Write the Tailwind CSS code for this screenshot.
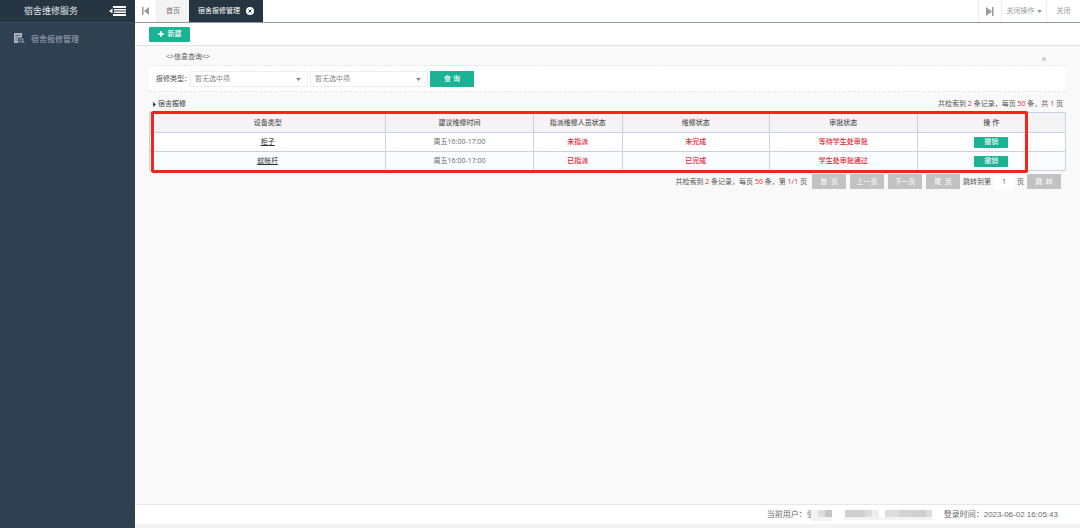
<!DOCTYPE html>
<html lang="zh-CN">
<head>
<meta charset="utf-8">
<title>宿舍维修服务</title>
<script src="https://cdn.jsdelivr.net/npm/@tailwindcss/browser@4"></script>
</head>
<body class="flex h-screen overflow-hidden bg-[#f9f9f9] font-['Open_Sans','Noto_Sans_CJK_SC',sans-serif] text-[7px] leading-[10px] text-[#555]">
<aside class="flex w-[135px] shrink-0 flex-col bg-[#2f4050]">
  <div class="flex h-[23px] items-center justify-between border-b border-[#3c4c5b] bg-[#263542] pr-2 pl-6 text-[9px] text-[#e4e7ea]">
    <h1>宿舍维修服务</h1>
    <button aria-label="收起菜单"><svg class="h-[10px] w-[18px]" viewBox="0 0 18 10" fill="#fff"><path d="M0 5l3.500-2.500v5zM4 0h13v2H4zM5 3h12v1.500H5zM5 5.500h12V7H5zM4 8h13v2H4z"/></svg></button>
  </div>
  <nav>
    <a href="#" class="flex h-[31px] items-center gap-1.5 pl-3.5 text-[8px] text-[#a1abbb]">
      <svg class="h-[11px] w-[11px]" viewBox="0 0 11 11" fill="none" stroke="#a7b1c2"><path d="M0 0h8v4.500A3.200 3.200 0 0 0 5 10H0z" fill="#a7b1c2" stroke="none"/><path d="M1.500 2.500h4.500M1.500 4.700h3M1.500 7h2" stroke="#2f4050" stroke-width=".6"/><circle cx="7.500" cy="7.300" r="1.700"/><path d="M8.700 8.500l2 2"/></svg>
      宿舍报修管理
    </a>
  </nav>
</aside>
<div class="flex min-w-0 flex-1 flex-col">
  <header class="flex h-[23px] shrink-0 border-b border-[#8d98a1] bg-white text-[#999]">
    <button class="flex w-[22px] items-center justify-center border-r border-[#eee]" aria-label="向左"><svg class="h-[8px] w-[8px]" viewBox="0 0 8 8" fill="#999"><path d="M0 0h1.500v8H0zM2 4l5-4v8z"/></svg></button>
    <a href="#" class="flex w-[32px] items-center justify-center bg-[#f3f3f3] text-[#777]">首页</a>
    <a href="#" class="flex w-[74px] items-center justify-center gap-1.5 bg-[#263542] text-white">宿舍报修管理
      <svg class="h-[8px] w-[8px]" viewBox="0 0 8 8"><circle cx="4" cy="4" r="4" fill="#fff"/><path d="M2.500 2.500l3 3M5.500 2.500l-3 3" stroke="#263542"/></svg>
    </a>
    <button class="ml-auto flex w-[24px] items-center justify-center border-x border-[#eee]" aria-label="向右"><svg class="h-[9px] w-[8px]" viewBox="0 0 8 9" fill="#999"><path d="M6 0h1.500v9H6zM0 0l6 4.500L0 9z"/></svg></button>
    <button class="flex w-[45px] items-center justify-center gap-0.5 border-r border-[#eee]">关闭操作<svg class="h-[3px] w-[5px]" viewBox="0 0 5 3" fill="#999"><path d="M0 0h5L2.500 3z"/></svg></button>
    <button class="w-[33px]">关闭</button>
  </header>
  <div class="flex h-[23px] shrink-0 items-center border-b border-[#e3e3e3] bg-white pl-3.5">
    <button class="flex h-[15px] w-[41px] items-center justify-center gap-1 rounded-[1px] bg-[#1ab394] font-medium text-white"><svg class="h-[6px] w-[6px]" viewBox="0 0 6 6" stroke="#fff" stroke-width="1.500"><path d="M3 0v6M0 3h6"/></svg>新建</button>
  </div>
  <main class="flex-1 px-3.5">
    <section>
      <div class="flex h-[20px] items-center justify-between border-b border-dashed border-[#e7e7e7] pt-0.5 pr-5 pl-[17px]">
        <h2>&lt;&gt;信息查询&lt;&gt;</h2>
        <button class="pt-1" aria-label="收起"><svg class="h-[4px] w-[4px]" viewBox="0 0 4 4" fill="none" stroke="#999" stroke-width=".8"><path d="M0 2.200l2-1.700 2 1.700M0 4l2-1.700L4 4"/></svg></button>
      </div>
      <form class="flex h-[26px] items-center border-b border-dashed border-[#e7e7e7] bg-white pl-[7px]">
        <label for="type1" class="w-[34px] whitespace-nowrap">报修类型：</label>
        <div class="relative mr-0.5">
          <select id="type1" class="block h-[16px] w-[118px] appearance-none border border-[#eee] bg-white pl-1 text-[#888]"><option>暂无选中项</option></select>
          <svg class="pointer-events-none absolute top-[7px] right-[7px] h-[3px] w-[5px]" viewBox="0 0 5 3" fill="#888"><path d="M0 0h5L2.500 3z"/></svg>
        </div>
        <div class="relative mr-0.5">
          <select aria-label="报修子类型" class="block h-[16px] w-[118px] appearance-none border border-[#eee] bg-white pl-1 text-[#888]"><option>暂无选中项</option></select>
          <svg class="pointer-events-none absolute top-[7px] right-[7px] h-[3px] w-[5px]" viewBox="0 0 5 3" fill="#888"><path d="M0 0h5L2.500 3z"/></svg>
        </div>
        <button type="button" class="h-[16px] w-[44px] bg-[#1ab394] font-medium text-white">查 询</button>
      </form>
    </section>
    <div class="flex h-[20px] items-center justify-between pt-1 pr-[3px] pl-1">
      <h2 class="flex items-center gap-0.5 font-medium text-[#555]"><svg class="h-[5px] w-[3px]" viewBox="0 0 3 5" fill="#263f58"><path d="M0 0l3 2.500L0 5z"/></svg>宿舍报修</h2>
      <p>共检索到 <span class="font-medium text-[#e22]">2</span> 条记录，每页 <span class="font-medium text-[#e22]">50</span> 条，共 <span class="font-medium text-[#e22]">1</span> 页</p>
    </div>
    <div class="relative">
      <table class="w-full table-fixed border-collapse text-center [&_td]:border [&_td]:border-[#ccd0dc] [&_td]:p-0 [&_th]:border [&_th]:border-[#ccd0dc] [&_th]:p-0">
        <colgroup><col class="w-[25.8%]"><col class="w-[16.1%]"><col class="w-[9.7%]"><col class="w-[16.1%]"><col class="w-[16.1%]"><col></colgroup>
        <thead><tr class="h-[20px] bg-[#f4f4f6] [&_th]:font-medium"><th>设备类型</th><th>建议维修时间</th><th>指派维修人员状态</th><th>维修状态</th><th>审批状态</th><th>操 作</th></tr></thead>
        <tbody>
          <tr class="h-[19px] bg-white"><td><a href="#" class="text-[#333] underline">柜子</a></td><td class="text-[#666]">周五16:00-17:00</td><td class="font-medium text-[#e22430]">未指派</td><td class="font-medium text-[#e22430]">未完成</td><td class="font-medium text-[#e22430]">等待学生处审批</td><td><button class="mx-auto block h-[11px] w-[34px] rounded-[1px] bg-[#1ab394] text-white">撤销</button></td></tr>
          <tr class="h-[19px] bg-[#f9fdff]"><td><a href="#" class="text-[#333] underline">蚊帐杆</a></td><td class="text-[#666]">周五16:00-17:00</td><td class="font-medium text-[#e22430]">已指派</td><td class="font-medium text-[#e22430]">已完成</td><td class="font-medium text-[#e22430]">学生处审批通过</td><td><button class="mx-auto block h-[11px] w-[34px] rounded-[1px] bg-[#1ab394] text-white">撤销</button></td></tr>
        </tbody>
      </table>
      <div class="pointer-events-none absolute -top-px right-[38px] -bottom-[2px] left-[2px] rounded-[2px] border-[3px] border-[#f5241a]"></div>
    </div>
    <nav class="flex items-center justify-end gap-[3px] pt-[3px] pr-[5px]" aria-label="分页">
      <p class="pr-0.5">共检索到 <span class="font-medium text-[#e22]">2</span> 条记录，每页 <span class="font-medium text-[#e22]">50</span> 条，第 <span class="font-medium text-[#e22]">1</span>/<span class="font-medium text-[#e22]">1</span> 页</p>
      <div class="flex gap-1">
        <button class="h-[15px] w-[34px] bg-[#c2c2c2] text-white">首&nbsp; 页</button>
        <button class="h-[15px] w-[34px] bg-[#c2c2c2] text-white">上一页</button>
        <button class="h-[15px] w-[34px] bg-[#c2c2c2] text-white">下一页</button>
        <button class="h-[15px] w-[34px] bg-[#c2c2c2] text-white">尾&nbsp; 页</button>
      </div>
      <label for="page">跳转到第</label>
      <input id="page" value="1" class="h-[15px] w-[20px] bg-white text-center">
      <span>页</span>
      <button class="h-[15px] w-[34px] bg-[#c2c2c2] text-white">跳&nbsp; 转</button>
    </nav>
  </main>
  <footer class="flex h-[24px] shrink-0 items-center justify-end border-t border-b-4 border-t-[#e7e7e7] border-b-[#f3f3f4] bg-white pr-[22px] font-['Liberation_Sans','Noto_Sans_CJK_SC',sans-serif] text-[8px] text-[#676a6c]">
    <span>当前用户：张</span>
    <svg class="mr-3 -ml-1 h-[12px] w-[121px]" viewBox="0 0 121 12" shape-rendering="crispEdges" aria-hidden="true"><path fill="#f3f3f3" d="M0 1h21v11H0zM34 8h87v3H34z"/><path fill="#dedede" d="M7 1h7v7H7z"/><path fill="#c4c4c4" d="M14 1h7v7h-7z"/><path fill="#cfcfcf" d="M34 1h20v7H34zM102 1h13v7h-13z"/><path fill="#dcdcdc" d="M54 1h7v7h-7zM74 1h14v7H74zM115 1h6v7h-6z"/><path fill="#ececec" d="M61 1h7v7h-7z"/><path fill="#d3d3d3" d="M88 1h14v7H88z"/></svg>
    <span>登录时间：2023-06-02 16:05:43</span>
  </footer>
</div>
</body>
</html>
